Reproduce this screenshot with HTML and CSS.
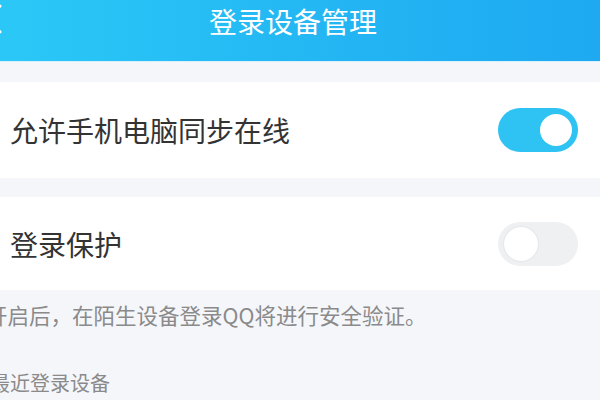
FILE: index.html
```html
<!DOCTYPE html>
<html lang="zh-CN">

<head>
    <meta charset="UTF-8">
    <meta name="viewport" content="width=device-width, initial-scale=1.0">
    <title>登录设备管理</title>
    <link rel="stylesheet" href="styles.css">
</head>

<body>
    <!-- 顶部标题栏 -->
    <div class="header">
        <svg class="back" width="20" height="32" viewBox="0 0 20 32">
            <path d="M16 3 L4 16 L16 29" fill="none" stroke="#fff" stroke-width="3" stroke-linecap="round" stroke-linejoin="round"/>
        </svg>
        <div class="title">登录设备管理</div>
    </div>

    <div class="card">
        <div class="row">
            <span class="label">允许手机电脑同步在线</span>
            <div class="switch on"><span class="knob"></span></div>
        </div>
    </div>

    <div class="card second">
        <div class="row">
            <span class="label">登录保护</span>
            <div class="switch"><span class="knob"></span></div>
        </div>
    </div>

    <p class="note">开启后，在陌生设备登录QQ将进行安全验证。</p>

    <p class="section">最近登录设备</p>
</body>

</html>
```

FILE: styles.css
```css
body {
    margin: 0;
    width: 600px;
    height: 400px;
    overflow: hidden;
    background-color: #f5f6fa;
    font-family: "Noto Sans CJK SC", "Noto Sans", sans-serif;
}

/* 标题栏 */
.header {
    position: relative;
    height: 62px;
    background: linear-gradient(90deg, #2bc8f7 0%, #23b6f3 55%, #1ea9f1 100%);
    border-bottom: 1px solid #d6f1fc;
    box-sizing: border-box;
}

.header .back {
    position: absolute;
    left: -16px;
    top: 3px;
}

.title {
    height: 42px;
    line-height: 42px;
    text-align: center;
    color: #fff;
    font-size: 28px;
    margin-left: -14px;
}

/* 设置项 */
.card {
    margin-top: 20px;
    background-color: #fff;
}

.card.second {
    margin-top: 19px;
}

.row {
    display: flex;
    align-items: center;
    justify-content: space-between;
    height: 96px;
    padding: 0 22px 0 10px;
}

.card.second .row {
    height: 93px;
}

.label {
    font-size: 28px;
    color: #333;
}

/* 开关 */
.switch {
    width: 80px;
    height: 44px;
    border-radius: 22px;
    background-color: #eff0f2;
    display: flex;
    align-items: center;
    padding: 0 6px;
    box-sizing: border-box;
}

.switch .knob {
    width: 34px;
    height: 34px;
    border-radius: 50%;
    background-color: #fff;
    box-shadow: 0 0 2px rgba(0, 0, 0, 0.12);
}

.switch.on {
    background-color: #2ec3f2;
    justify-content: flex-end;
}

.switch.on .knob {
    width: 32px;
    height: 32px;
    box-shadow: none;
}

/* 说明文字 */
.note {
    margin: 11px 0 0 -14px;
    font-size: 21.5px;
    line-height: 28px;
    color: #8a8a8a;
}

.section {
    margin: 40px 0 0 -10px;
    font-size: 20px;
    line-height: 28px;
    color: #8a8a8a;
}
```
